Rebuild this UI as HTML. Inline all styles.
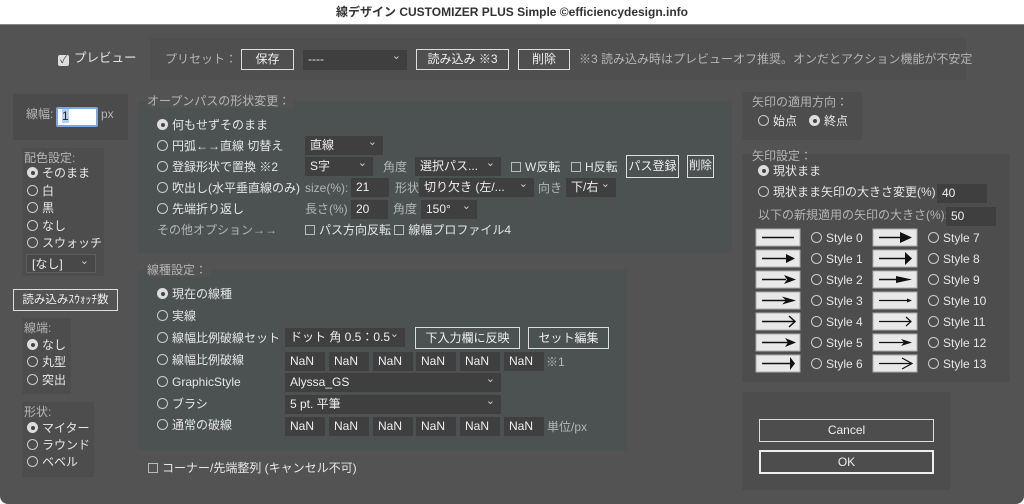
<!DOCTYPE html>
<html><head><meta charset="utf-8"><style>
*{margin:0;padding:0;box-sizing:border-box}
body{width:1024px;height:504px;background:#fff;font-family:"Liberation Sans","Noto Sans CJK JP",sans-serif;font-size:12px;color:#e6e6e6;position:relative;overflow:hidden}
#dlg{position:absolute;left:0;top:24px;width:1024px;height:480px;background:#535353;border-bottom-left-radius:8px;border-bottom-right-radius:8px;border-top:1px solid #888}
.a{position:absolute;white-space:nowrap;line-height:14px}
.p{position:absolute;background:#4d4d4d}
.bp{position:absolute;background:#4c5151}
.btn{position:absolute;border:1px solid #ddd;text-align:center;color:#eee;line-height:18px;font-size:12px}
.f{position:absolute;background:#3f3f3f;color:#eee;padding-left:5px;line-height:18px;height:19px}
.dd:after{content:"⌄";position:absolute;right:6px;top:-3px;font-size:11px;color:#ccc}
.r{display:inline-block;width:11px;height:11px;border:1px solid #ccc;border-radius:50%;vertical-align:-1px;margin-right:4px;position:relative}
.r.on{background:#ddd;border-color:#ddd}
.r.on:after{content:"";position:absolute;left:2.5px;top:2.5px;width:4px;height:4px;border-radius:50%;background:#444}
.c{display:inline-block;width:10px;height:10px;border:1px solid #bbb;vertical-align:-1px;margin-right:4px}
.dim{color:#b5b5b5}
.ab{position:absolute;width:44px;height:17px;background:#e8e8e8;border:1px solid #aaa}
</style></head><body>
<div class="a" style="left:0;width:1024px;top:5px;text-align:center;font-weight:bold;color:#333;font-size:12px">線デザイン CUSTOMIZER PLUS Simple ©efficiencydesign.info</div>
<div id="dlg"></div>

<!-- preview -->
<div class="a" style="left:58px;top:51px;font-size:12.5px"><span style="display:inline-block;width:11px;height:11px;background:#ddd;border-radius:2px;vertical-align:-1px;margin-right:5px;color:#444;font-size:10px;line-height:11px;text-align:center">✓</span>プレビュー</div>

<!-- preset -->
<div class="p" style="left:150px;top:38px;width:816px;height:42px;background:#4f4f4f"></div>
<div class="a dim" style="left:165px;top:52px">プリセット：</div>
<div class="btn" style="left:241px;top:49px;width:53px;height:21px">保存</div>
<div class="f dd" style="left:303px;top:50px;width:104px;height:20px">----</div>
<div class="btn" style="left:416px;top:49px;width:93px;height:21px">読み込み ※3</div>
<div class="btn" style="left:518px;top:49px;width:52px;height:21px">削除</div>
<div class="a dim" style="left:579px;top:52px">※3 読み込み時はプレビューオフ推奨。オンだとアクション機能が不安定</div>

<!-- left column -->
<div class="p" style="left:13px;top:94px;width:115px;height:46px;background:#4b4b4b"></div>
<div class="a dim" style="left:26px;top:107px">線幅:</div>
<div class="a" style="left:56px;top:107px;width:42px;height:20px;background:#fff;border:2px solid #7aa7e0;border-radius:2px;color:#222;padding-left:4px;line-height:15px"><span style="background:#b5d0f0">1</span></div>
<div class="a dim" style="left:101px;top:107px">px</div>
<div class="p" style="left:22px;top:148px;width:82px;height:128px"></div>
<div class="a dim" style="left:24px;top:151px">配色設定:</div>
<div class="a" style="left:27px;top:166px"><span class="r on"></span>そのまま</div>
<div class="a" style="left:27px;top:184px"><span class="r"></span>白</div>
<div class="a" style="left:27px;top:201px"><span class="r"></span>黒</div>
<div class="a" style="left:27px;top:219px"><span class="r"></span>なし</div>
<div class="a" style="left:27px;top:236px"><span class="r"></span>スウォッチ</div>
<div class="f dd" style="left:26px;top:254px;width:70px;height:19px;background:#484848;border:1px solid #5e5e5e">[なし]</div>
<div class="btn" style="left:13px;top:289px;width:105px;height:22px;line-height:20px;font-size:11.5px">読み込みｽｳｫｯﾁ数</div>
<div class="p" style="left:22px;top:318px;width:49px;height:76px"></div>
<div class="a dim" style="left:24px;top:321px">線端:</div>
<div class="a" style="left:27px;top:338px"><span class="r on"></span>なし</div>
<div class="a" style="left:27px;top:355px"><span class="r"></span>丸型</div>
<div class="a" style="left:27px;top:373px"><span class="r"></span>突出</div>
<div class="p" style="left:22px;top:402px;width:72px;height:75px"></div>
<div class="a dim" style="left:24px;top:405px">形状:</div>
<div class="a" style="left:27px;top:421px"><span class="r on"></span>マイター</div>
<div class="a" style="left:27px;top:438px"><span class="r"></span>ラウンド</div>
<div class="a" style="left:27px;top:455px"><span class="r"></span>ベベル</div>

<!-- open path -->
<div class="bp" style="left:138px;top:101px;width:594px;height:152px"></div>
<div class="a dim" style="left:147px;top:94px;background:#535353;padding-right:4px">オープンパスの形状変更：</div>
<div class="a" style="left:157px;top:118px"><span class="r on"></span>何もせずそのまま</div>
<div class="a" style="left:157px;top:139px"><span class="r"></span>円弧←→直線 切替え</div>
<div class="a" style="left:157px;top:160px"><span class="r"></span>登録形状で置換 ※2</div>
<div class="a" style="left:157px;top:181px"><span class="r"></span>吹出し(水平垂直線のみ)</div>
<div class="a" style="left:157px;top:202px"><span class="r"></span>先端折り返し</div>
<div class="a dim" style="left:157px;top:223px">その他オプション→→</div>
<div class="f dd" style="left:305px;top:136px;width:78px">直線</div>
<div class="f dd" style="left:305px;top:157px;width:68px">S字</div>
<div class="a dim" style="left:383px;top:160px">角度</div>
<div class="f dd" style="left:415px;top:157px;width:86px">選択パス...</div>
<div class="a" style="left:511px;top:160px"><span class="c"></span>W反転</div>
<div class="a" style="left:571px;top:160px"><span class="c"></span>H反転</div>
<div class="btn" style="left:626px;top:155px;width:53px;height:23px;line-height:21px">パス登録</div>
<div class="btn" style="left:687px;top:155px;width:27px;height:23px;line-height:21px;font-size:11.5px">削除</div>
<div class="a dim" style="left:305px;top:181px">size(%):</div>
<div class="f" style="left:351px;top:178px;width:38px">21</div>
<div class="a dim" style="left:395px;top:181px">形状</div>
<div class="f dd" style="left:419px;top:178px;width:115px">切り欠き (左/...</div>
<div class="a dim" style="left:538px;top:181px">向き</div>
<div class="f dd" style="left:566px;top:178px;width:50px">下/右</div>
<div class="a dim" style="left:305px;top:202px">長さ(%)</div>
<div class="f" style="left:351px;top:200px;width:37px">20</div>
<div class="a dim" style="left:393px;top:202px">角度</div>
<div class="f dd" style="left:421px;top:200px;width:56px">150°</div>
<div class="a" style="left:305px;top:223px"><span class="c"></span>パス方向反転 <span class="c"></span>線幅プロファイル4</div>

<!-- line type -->
<div class="bp" style="left:138px;top:270px;width:489px;height:180px"></div>
<div class="a dim" style="left:147px;top:263px;background:#535353;padding-right:4px">線種設定：</div>
<div class="a" style="left:157px;top:287px"><span class="r on"></span>現在の線種</div>
<div class="a" style="left:157px;top:309px"><span class="r"></span>実線</div>
<div class="a" style="left:157px;top:331px"><span class="r"></span>線幅比例破線セット</div>
<div class="a" style="left:157px;top:353px"><span class="r"></span>線幅比例破線</div>
<div class="a" style="left:157px;top:375px"><span class="r"></span>GraphicStyle</div>
<div class="a" style="left:157px;top:397px"><span class="r"></span>ブラシ</div>
<div class="a" style="left:157px;top:418px"><span class="r"></span>通常の破線</div>
<div class="f dd" style="left:285px;top:328px;width:120px">ドット 角 0.5：0.5</div>
<div class="btn" style="left:415px;top:327px;width:105px;height:22px;line-height:20px">下入力欄に反映</div>
<div class="btn" style="left:528px;top:327px;width:81px;height:22px;line-height:20px">セット編集</div>
<div class="f" style="left:285px;top:352px;width:40px">NaN</div>
<div class="f" style="left:329px;top:352px;width:40px">NaN</div>
<div class="f" style="left:373px;top:352px;width:40px">NaN</div>
<div class="f" style="left:416px;top:352px;width:40px">NaN</div>
<div class="f" style="left:460px;top:352px;width:40px">NaN</div>
<div class="f" style="left:504px;top:352px;width:40px">NaN</div>
<div class="a dim" style="left:546px;top:355px">※1</div>
<div class="f dd" style="left:285px;top:373px;width:216px">Alyssa_GS</div>
<div class="f dd" style="left:285px;top:395px;width:216px">5 pt. 平筆</div>
<div class="f" style="left:285px;top:417px;width:40px">NaN</div>
<div class="f" style="left:329px;top:417px;width:40px">NaN</div>
<div class="f" style="left:373px;top:417px;width:40px">NaN</div>
<div class="f" style="left:416px;top:417px;width:40px">NaN</div>
<div class="f" style="left:460px;top:417px;width:40px">NaN</div>
<div class="f" style="left:504px;top:417px;width:40px">NaN</div>
<div class="a dim" style="left:547px;top:420px">単位/px</div>
<div class="a" style="left:148px;top:461px"><span class="c"></span>コーナー/先端整列 (キャンセル不可)</div>

<!-- right -->
<div class="p" style="left:742px;top:92px;width:120px;height:48px"></div>
<div class="a dim" style="left:752px;top:95px">矢印の適用方向：</div>
<div class="a" style="left:758px;top:114px"><span class="r"></span>始点　<span class="r on"></span>終点</div>
<div class="p" style="left:742px;top:154px;width:268px;height:228px"></div>
<div class="a dim" style="left:752px;top:149px">矢印設定：</div>
<div class="a" style="left:758px;top:164px"><span class="r on"></span>現状まま</div>
<div class="a" style="left:758px;top:185px"><span class="r"></span>現状まま矢印の大きさ変更(%)</div>
<div class="f" style="left:937px;top:184px;width:50px">40</div>
<div class="a dim" style="left:758px;top:208px">以下の新規適用の矢印の大きさ(%):</div>
<div class="f" style="left:946px;top:207px;width:50px">50</div>
<div class="p" style="left:742px;top:392px;width:208px;height:98px"></div>
<div class="btn" style="left:759px;top:419px;width:175px;height:23px;line-height:21px">Cancel</div>
<div class="btn" style="left:759px;top:450px;width:175px;height:24px;line-height:21px;border:2px solid #eee">OK</div>

<svg style="position:absolute;left:0;top:0" width="1024" height="504">
<g stroke="#111" fill="#111" stroke-width="1.5">
<!-- col1 -->
<rect x="756" y="229" width="44" height="17" fill="#e8e8e8" stroke="#aaa" stroke-width="1"/>
<line x1="762" y1="237.5" x2="794" y2="237.5"/>
<rect x="756" y="250" width="44" height="17" fill="#e8e8e8" stroke="#aaa" stroke-width="1"/>
<line x1="762" y1="258.5" x2="788" y2="258.5"/><polygon points="786,254 795,258.5 786,263" stroke="none"/>
<rect x="756" y="271" width="44" height="17" fill="#e8e8e8" stroke="#aaa" stroke-width="1"/>
<line x1="762" y1="279.5" x2="786" y2="279.5"/><polygon points="784,275 796,279.5 784,284 787,279.5" stroke="none"/>
<rect x="756" y="292" width="44" height="17" fill="#e8e8e8" stroke="#aaa" stroke-width="1"/>
<line x1="762" y1="300.5" x2="786" y2="300.5"/><polygon points="782,296.5 796,300.5 782,304.5 786,300.5" stroke="none"/>
<rect x="756" y="313" width="44" height="17" fill="#e8e8e8" stroke="#aaa" stroke-width="1"/>
<line x1="762" y1="321.5" x2="794" y2="321.5"/><polyline points="789,316 795,321.5 789,327" fill="none"/>
<rect x="756" y="334" width="44" height="17" fill="#e8e8e8" stroke="#aaa" stroke-width="1"/>
<line x1="762" y1="342.5" x2="788" y2="342.5"/><polygon points="785,338 796,342.5 785,347 788,342.5" stroke="none"/>
<rect x="756" y="355" width="44" height="17" fill="#e8e8e8" stroke="#aaa" stroke-width="1"/>
<line x1="762" y1="363.5" x2="790" y2="363.5"/><polygon points="790,357 795,363.5 790,370" stroke="none"/>
<!-- col2 -->
<rect x="873" y="229" width="44" height="17" fill="#e8e8e8" stroke="#aaa" stroke-width="1"/>
<line x1="879" y1="237.5" x2="902" y2="237.5"/><polygon points="900,232 912,237.5 900,243" stroke="none"/>
<rect x="873" y="250" width="44" height="17" fill="#e8e8e8" stroke="#aaa" stroke-width="1"/>
<line x1="879" y1="258.5" x2="906" y2="258.5"/><polygon points="905,252 912,258.5 905,265" stroke="none"/>
<rect x="873" y="271" width="44" height="17" fill="#e8e8e8" stroke="#aaa" stroke-width="1"/>
<line x1="879" y1="279.5" x2="900" y2="279.5"/><polygon points="896,276 912,279.5 896,283" stroke="none"/>
<rect x="873" y="292" width="44" height="17" fill="#e8e8e8" stroke="#aaa" stroke-width="1"/>
<line x1="879" y1="300.5" x2="910" y2="300.5" stroke-width="1.2"/><polygon points="907,298.5 912,300.5 907,302.5" stroke="none"/>
<rect x="873" y="313" width="44" height="17" fill="#e8e8e8" stroke="#aaa" stroke-width="1"/>
<line x1="879" y1="321.5" x2="911" y2="321.5" stroke-width="1.2"/><polyline points="906,317 911,321.5 906,326" fill="none" stroke-width="1.2"/>
<rect x="873" y="334" width="44" height="17" fill="#e8e8e8" stroke="#aaa" stroke-width="1"/>
<line x1="879" y1="342.5" x2="910" y2="342.5" stroke-width="1.2"/><polygon points="901,339 912,342.5 901,346 904,342.5" stroke="none"/>
<rect x="873" y="355" width="44" height="17" fill="#e8e8e8" stroke="#aaa" stroke-width="1"/>
<line x1="879" y1="363.5" x2="911" y2="363.5" stroke-width="1.2"/><polyline points="902,358 912,363.5 902,369" fill="none" stroke-width="1.2"/>
</g></svg>
<div class="a" style="left:811px;top:231px"><span class="r"></span>Style 0</div>
<div class="a" style="left:811px;top:252px"><span class="r"></span>Style 1</div>
<div class="a" style="left:811px;top:273px"><span class="r"></span>Style 2</div>
<div class="a" style="left:811px;top:294px"><span class="r"></span>Style 3</div>
<div class="a" style="left:811px;top:315px"><span class="r"></span>Style 4</div>
<div class="a" style="left:811px;top:336px"><span class="r"></span>Style 5</div>
<div class="a" style="left:811px;top:357px"><span class="r"></span>Style 6</div>
<div class="a" style="left:928px;top:231px"><span class="r"></span>Style 7</div>
<div class="a" style="left:928px;top:252px"><span class="r"></span>Style 8</div>
<div class="a" style="left:928px;top:273px"><span class="r"></span>Style 9</div>
<div class="a" style="left:928px;top:294px"><span class="r"></span>Style 10</div>
<div class="a" style="left:928px;top:315px"><span class="r"></span>Style 11</div>
<div class="a" style="left:928px;top:336px"><span class="r"></span>Style 12</div>
<div class="a" style="left:928px;top:357px"><span class="r"></span>Style 13</div>
</body></html>
